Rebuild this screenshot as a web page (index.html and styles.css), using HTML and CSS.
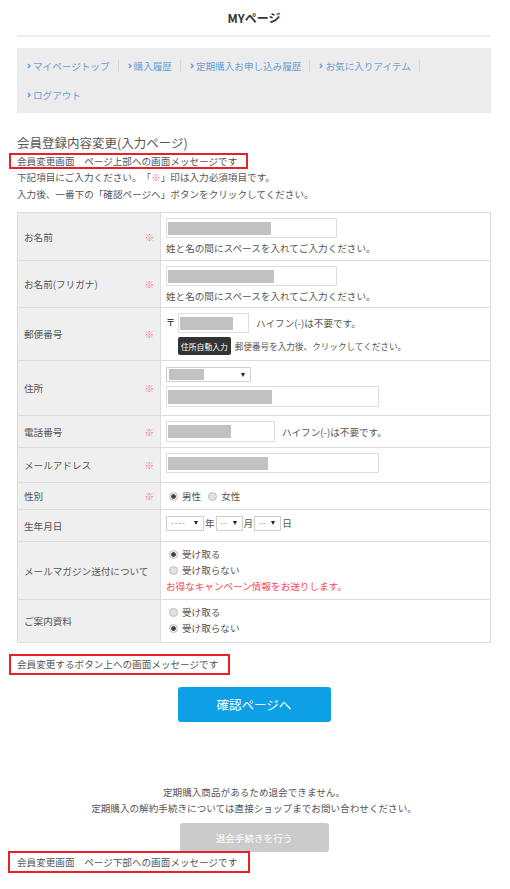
FILE: index.html
```html
<!DOCTYPE html>
<html lang="ja">
<head>
    <meta charset="UTF-8">
    <meta name="viewport" content="width=device-width, initial-scale=1.0">
    <title>MYページ</title>
    <link rel="stylesheet" href="styles.css">
</head>
<body>
    <div class="container">
        <div class="page-header">
            <h1>MYページ</h1>
        </div>
        <ul class="mypage-nav">
            <li><a href="#"><svg class="chev" viewBox="0 0 4 6"><path d="M1 1l2 2-2 2"/></svg>マイページトップ</a></li>
            <li><a href="#"><svg class="chev" viewBox="0 0 4 6"><path d="M1 1l2 2-2 2"/></svg>購入履歴</a></li>
            <li><a href="#"><svg class="chev" viewBox="0 0 4 6"><path d="M1 1l2 2-2 2"/></svg>定期購入お申し込み履歴</a></li>
            <li><a href="#"><svg class="chev" viewBox="0 0 4 6"><path d="M1 1l2 2-2 2"/></svg>お気に入りアイテム</a></li>
            <li><a href="#"><svg class="chev" viewBox="0 0 4 6"><path d="M1 1l2 2-2 2"/></svg>ログアウト</a></li>
        </ul>

        <h2 class="section-title">会員登録内容変更(入力ページ)</h2>
        <div class="notice notice-top">会員変更画面　ページ上部への画面メッセージです</div>
        <p class="lead">下記項目にご入力ください。「<span class="req">※</span>」印は入力必須項目です。<br>入力後、一番下の「確認ページへ」ボタンをクリックしてください。</p>

        <table class="form-table">
            <tr class="row-name">
                <th>お名前<span class="req">※</span></th>
                <td>
                    <div class="field w-name"><span class="mask m-name"></span></div>
                    <p class="help">姓と名の間にスペースを入れてご入力ください。</p>
                </td>
            </tr>
            <tr class="row-kana">
                <th>お名前(フリガナ)<span class="req">※</span></th>
                <td>
                    <div class="field w-name"><span class="mask m-kana"></span></div>
                    <p class="help">姓と名の間にスペースを入れてご入力ください。</p>
                </td>
            </tr>
            <tr class="row-postal">
                <th>郵便番号<span class="req">※</span></th>
                <td>
                    <div class="line">
                        <span class="zip-mark">〒</span>
                        <div class="field w-postal"><span class="mask m-postal"></span></div>
                        <span class="note">ハイフン(-)は不要です。</span>
                    </div>
                    <div class="line zip-auto">
                        <button type="button" class="btn-zip">住所自動入力</button>
                        <span class="small-note">郵便番号を入力後、クリックしてください。</span>
                    </div>
                </td>
            </tr>
            <tr class="row-address">
                <th>住所<span class="req">※</span></th>
                <td>
                    <div class="select w-pref"><span class="mask m-pref"></span><span class="arrow"></span></div>
                    <div class="field w-wide addr-field"><span class="mask m-addr"></span></div>
                </td>
            </tr>
            <tr class="row-tel">
                <th>電話番号<span class="req">※</span></th>
                <td>
                    <div class="line">
                        <div class="field w-tel tall"><span class="mask m-tel"></span></div>
                        <span class="note">ハイフン(-)は不要です。</span>
                    </div>
                </td>
            </tr>
            <tr class="row-mail">
                <th>メールアドレス<span class="req">※</span></th>
                <td>
                    <div class="field w-wide"><span class="mask m-mail"></span></div>
                </td>
            </tr>
            <tr class="row-sex">
                <th>性別<span class="req">※</span></th>
                <td>
                    <div class="line radios">
                        <label class="radio"><input type="radio" name="sex" checked>男性</label>
                        <label class="radio"><input type="radio" name="sex">女性</label>
                    </div>
                </td>
            </tr>
            <tr class="row-birth">
                <th>生年月日</th>
                <td>
                    <div class="line birth">
                        <div class="select w-year"><span class="placeholder">----</span><span class="arrow"></span></div>年
                        <div class="select w-day"><span class="placeholder">--</span><span class="arrow"></span></div>月
                        <div class="select w-day"><span class="placeholder">--</span><span class="arrow"></span></div>日
                    </div>
                </td>
            </tr>
            <tr class="row-mag">
                <th>メールマガジン送付について</th>
                <td>
                    <label class="radio"><input type="radio" name="mag" checked>受け取る</label>
                    <label class="radio"><input type="radio" name="mag">受け取らない</label>
                    <p class="campaign">お得なキャンペーン情報をお送りします。</p>
                </td>
            </tr>
            <tr class="row-info">
                <th>ご案内資料</th>
                <td>
                    <label class="radio"><input type="radio" name="info">受け取る</label>
                    <label class="radio"><input type="radio" name="info" checked>受け取らない</label>
                </td>
            </tr>
        </table>

        <div class="notice notice-button">会員変更するボタン上への画面メッセージです</div>
        <button type="button" class="btn-confirm">確認ページへ</button>

        <div class="withdraw">
            <p>定期購入商品があるため退会できません。</p>
            <p>定期購入の解約手続きについては直接ショップまでお問い合わせください。</p>
        </div>
        <button type="button" class="btn-withdraw">退会手続きを行う</button>
        <div class="notice notice-bottom">会員変更画面　ページ下部への画面メッセージです</div>
    </div>
</body>
</html>
```

FILE: styles.css
```css
body {
    margin: 0;
    background-color: #fff;
    font-family: "Noto Sans CJK JP", "Noto Sans", sans-serif;
    font-size: 9.6px;
    line-height: 16px;
    color: #555;
    text-spacing-trim: space-all;
}
.container {
    width: 474px;
    margin-left: 17px;
}
.page-header {
    border-bottom: 2px solid #eee;
    text-align: center;
}
.page-header h1 {
    margin: 0;
    padding: 8px 0 7px;
    font-size: 12px;
    line-height: 20px;
    color: #333;
}
.mypage-nav {
    list-style: none;
    margin: 11px 0 0;
    padding: 12px 10px;
    background-color: #ececec;
    display: flex;
    flex-wrap: wrap;
    row-gap: 17px;
}
.mypage-nav li {
    line-height: 12px;
    padding-right: 8px;
    margin-right: 9px;
    border-right: 1px solid #d6d6d6;
}
.mypage-nav li:last-child {
    border-right: none;
}
.mypage-nav a {
    display: flex;
    align-items: center;
    color: #6a9fd5;
    text-decoration: none;
}
.chev {
    width: 4px;
    height: 6px;
    margin-right: 2px;
}
.chev path {
    fill: none;
    stroke: currentColor;
    stroke-width: 1.5;
}
.section-title {
    margin: 21px 0 0;
    font-size: 12.5px;
    font-weight: normal;
    line-height: 18px;
    color: #555;
}
.notice {
    width: fit-content;
    border: 2px solid #e8202a;
}
.notice-top {
    margin: 1px 0 0 -8px;
    padding: 0 9px 0 6px;
    line-height: 12px;
}
.notice-button {
    margin: 11px 0 0 -8px;
    padding: 0 10px 0 6px;
    line-height: 17px;
}
.notice-bottom {
    margin: -1px 0 0 -9px;
    padding: 0 11px 0 7px;
    line-height: 18px;
}
.lead {
    margin: 0;
    line-height: 17px;
}
.req {
    color: #f07a7a;
}

/* form table */
.form-table {
    width: 100%;
    margin-top: 9px;
    border-collapse: collapse;
    border: 1px solid #dcdcdc;
}
.form-table th,
.form-table td {
    border: 1px solid #dcdcdc;
}
.form-table th {
    width: 130px;
    padding: 0 6px;
    background-color: #efefef;
    font-weight: normal;
    text-align: left;
    vertical-align: middle;
}
.form-table th .req {
    float: right;
}
.form-table td {
    padding: 5px 5px 4px;
    vertical-align: top;
}
.row-kana td { padding-bottom: 3px; }
.row-postal td { padding-bottom: 5px; }
.row-address td { padding: 6px 5px 8px; }
.row-tel td { padding-bottom: 5px; }
.row-mail td { padding-bottom: 9px; }
.row-sex td { padding-bottom: 5px; }
.row-birth td { padding-bottom: 10px; }
.row-mag td { padding: 4px 5px 5px; }
.row-info td { padding: 4px 5px 6px; }

.field {
    display: flex;
    align-items: center;
    box-sizing: border-box;
    height: 20px;
    padding: 0 1px;
    border: 1px solid #dedede;
    background-color: #fff;
}
.field.tall {
    height: 21px;
}
.mask {
    display: block;
    height: 13px;
    background-color: #c2c2c2;
}
.w-name { width: 171px; }
.w-postal { width: 71px; }
.w-wide { width: 213px; }
.w-tel { width: 109px; }
.m-name { width: 103px; }
.m-kana { width: 106px; }
.m-postal { width: 53px; }
.m-addr { width: 104px; height: 14px; }
.m-tel { width: 63px; }
.m-mail { width: 100px; }
.m-pref { width: 35px; height: 11px; }
.addr-field {
    height: 21px;
    margin-top: 4px;
}
.help {
    margin: 2px 0 0;
}
.line {
    display: flex;
    align-items: center;
}
.zip-mark {
    width: 10px;
    margin-right: 2px;
    font-size: 9px;
    font-weight: bold;
    color: #444;
}
.note {
    margin-left: 7px;
}
.zip-auto {
    margin-top: 4px;
    padding-left: 12px;
}
.btn-zip {
    height: 18px;
    padding: 0 3px;
    border: none;
    border-radius: 2px;
    background-color: #333;
    color: #fff;
    font-family: inherit;
    font-size: 7.8px;
}
.small-note {
    margin-left: 4px;
    font-size: 8.6px;
}
.select {
    display: flex;
    align-items: center;
    justify-content: space-between;
    box-sizing: border-box;
    height: 15px;
    padding: 0 5px 0 2px;
    border: 1px solid #d0d0d0;
    background-color: #fff;
}
.select .arrow {
    width: 0;
    height: 0;
    border-left: 2.5px solid transparent;
    border-right: 2.5px solid transparent;
    border-top: 4px solid #222;
}
.w-pref { width: 85px; }
.w-year { width: 38px; }
.w-day { width: 27px; }
.placeholder {
    padding-left: 2px;
    font-family: "Liberation Sans", sans-serif;
    font-size: 8px;
    letter-spacing: 1px;
    color: #888;
}
.birth {
    gap: 1px;
    height: 16px;
}
.radios {
    gap: 4px;
}
.radio {
    display: flex;
    align-items: center;
    gap: 4px;
    width: fit-content;
}
.radio input {
    appearance: none;
    width: 9px;
    height: 9px;
    margin: 0 0 0 3px;
    border: 1px solid #bdbdbd;
    border-radius: 50%;
    background-color: #e2e2e2;
}
.radio input:checked {
    background: radial-gradient(circle, #444 0 2px, #f2f2f2 2.6px);
}
.campaign {
    margin: 0;
    color: #f44b4f;
}

/* buttons */
.btn-confirm {
    display: block;
    width: 153px;
    height: 35px;
    margin: 12px auto 0;
    border: none;
    border-radius: 3px;
    background-color: #0ea0e6;
    color: #fff;
    font-family: inherit;
    font-size: 12.5px;
}
.withdraw {
    margin-top: 62px;
    text-align: center;
}
.withdraw p {
    margin: 0;
}
.btn-withdraw {
    display: block;
    width: 149px;
    height: 29px;
    margin: 7px auto 0;
    border: none;
    border-radius: 3px;
    background-color: #cbcbcb;
    color: #fff;
    font-family: inherit;
    font-size: 9.6px;
}
```
